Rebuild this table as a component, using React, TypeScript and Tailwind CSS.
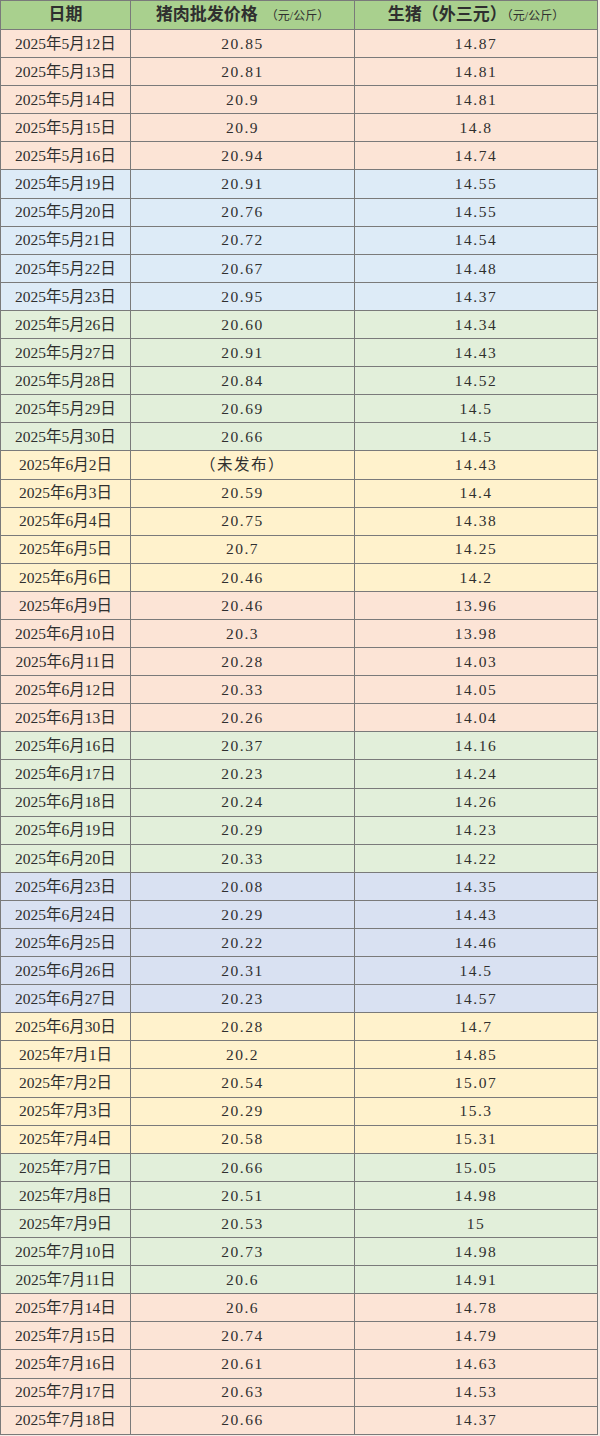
import React from 'react';

type Group = { color: string; rows: [string, string, string][] };

const groups: Group[] = [
    {
        color: 'bg-[#fce4d6]',
        rows: [
            ['2025年5月12日', '20.85', '14.87'],
            ['2025年5月13日', '20.81', '14.81'],
            ['2025年5月14日', '20.9', '14.81'],
            ['2025年5月15日', '20.9', '14.8'],
            ['2025年5月16日', '20.94', '14.74'],
        ],
    },
    {
        color: 'bg-[#ddebf7]',
        rows: [
            ['2025年5月19日', '20.91', '14.55'],
            ['2025年5月20日', '20.76', '14.55'],
            ['2025年5月21日', '20.72', '14.54'],
            ['2025年5月22日', '20.67', '14.48'],
            ['2025年5月23日', '20.95', '14.37'],
        ],
    },
    {
        color: 'bg-[#e2efda]',
        rows: [
            ['2025年5月26日', '20.60', '14.34'],
            ['2025年5月27日', '20.91', '14.43'],
            ['2025年5月28日', '20.84', '14.52'],
            ['2025年5月29日', '20.69', '14.5'],
            ['2025年5月30日', '20.66', '14.5'],
        ],
    },
    {
        color: 'bg-[#fff2cc]',
        rows: [
            ['2025年6月2日', '（未发布）', '14.43'],
            ['2025年6月3日', '20.59', '14.4'],
            ['2025年6月4日', '20.75', '14.38'],
            ['2025年6月5日', '20.7', '14.25'],
            ['2025年6月6日', '20.46', '14.2'],
        ],
    },
    {
        color: 'bg-[#fce4d6]',
        rows: [
            ['2025年6月9日', '20.46', '13.96'],
            ['2025年6月10日', '20.3', '13.98'],
            ['2025年6月11日', '20.28', '14.03'],
            ['2025年6月12日', '20.33', '14.05'],
            ['2025年6月13日', '20.26', '14.04'],
        ],
    },
    {
        color: 'bg-[#e2efda]',
        rows: [
            ['2025年6月16日', '20.37', '14.16'],
            ['2025年6月17日', '20.23', '14.24'],
            ['2025年6月18日', '20.24', '14.26'],
            ['2025年6月19日', '20.29', '14.23'],
            ['2025年6月20日', '20.33', '14.22'],
        ],
    },
    {
        color: 'bg-[#d9e1f2]',
        rows: [
            ['2025年6月23日', '20.08', '14.35'],
            ['2025年6月24日', '20.29', '14.43'],
            ['2025年6月25日', '20.22', '14.46'],
            ['2025年6月26日', '20.31', '14.5'],
            ['2025年6月27日', '20.23', '14.57'],
        ],
    },
    {
        color: 'bg-[#fff2cc]',
        rows: [
            ['2025年6月30日', '20.28', '14.7'],
            ['2025年7月1日', '20.2', '14.85'],
            ['2025年7月2日', '20.54', '15.07'],
            ['2025年7月3日', '20.29', '15.3'],
            ['2025年7月4日', '20.58', '15.31'],
        ],
    },
    {
        color: 'bg-[#e2efda]',
        rows: [
            ['2025年7月7日', '20.66', '15.05'],
            ['2025年7月8日', '20.51', '14.98'],
            ['2025年7月9日', '20.53', '15'],
            ['2025年7月10日', '20.73', '14.98'],
            ['2025年7月11日', '20.6', '14.91'],
        ],
    },
    {
        color: 'bg-[#fce4d6]',
        rows: [
            ['2025年7月14日', '20.6', '14.78'],
            ['2025年7月15日', '20.74', '14.79'],
            ['2025年7月16日', '20.61', '14.63'],
            ['2025年7月17日', '20.63', '14.53'],
            ['2025年7月18日', '20.66', '14.37'],
        ],
    },
];

const cell = 'border border-[#7a7a7a] text-center align-middle p-0';

const App: React.FC = () => {
    return (
        <div className="w-[600px] h-[1436px] bg-[#f6ece6] overflow-hidden">
            <table
                className="w-[597px] border-collapse table-fixed text-[#2f2f2f]"
                style={{ fontFamily: '"Liberation Serif", "Noto Sans CJK SC", serif' }}
            >
                <colgroup>
                    <col className="w-[130px]" />
                    <col className="w-[224px]" />
                    <col className="w-[243px]" />
                </colgroup>
                <thead>
                    <tr className="h-[29px] bg-[#a9d08e]">
                        <th className={`${cell} text-[17px] font-bold`}>日期</th>
                        <th className={`${cell} text-[17px] font-bold`}>
                            猪肉批发价格
                            <span className="text-[12px] font-normal ml-2">（元/公斤）</span>
                        </th>
                        <th className={`${cell} text-[17px] font-bold`}>
                            生猪（外三元）
                            <span className="text-[12px] font-normal">（元/公斤）</span>
                        </th>
                    </tr>
                </thead>
                <tbody>
                    {groups.map((g, gi) =>
                        g.rows.map((r, ri) => (
                            <tr key={`${gi}-${ri}`} className={`h-[28.1px] ${g.color} text-[15.5px] leading-none`}>
                                <td className={cell}>{r[0]}</td>
                                <td className={`${cell} tracking-[1.5px]`}>{r[1]}</td>
                                <td className={`${cell} tracking-[1.5px]`}>{r[2]}</td>
                            </tr>
                        ))
                    )}
                </tbody>
            </table>
        </div>
    );
};

export default App;
